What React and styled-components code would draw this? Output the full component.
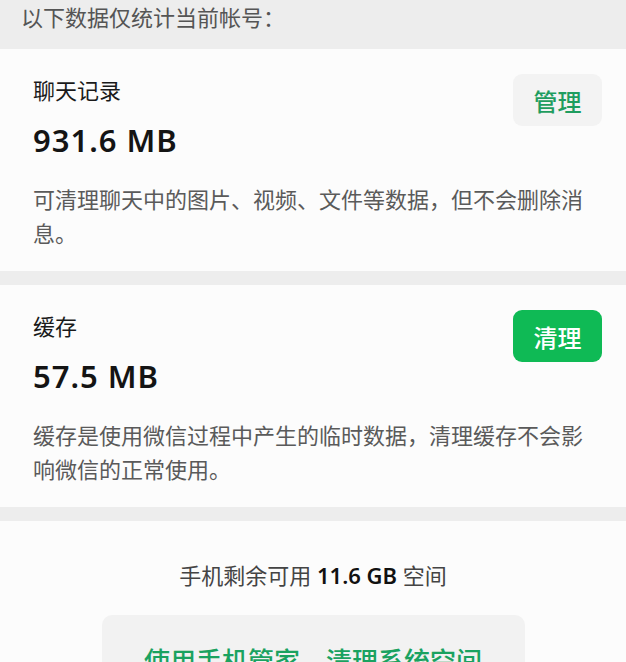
import React from "react";
import styled, { createGlobalStyle } from "styled-components";

const Global = createGlobalStyle`
  html, body { margin: 0; padding: 0; background: #ededed; overflow: hidden; }
  body { font-family: "Noto Sans", "Noto Sans CJK SC", sans-serif; }
`;

const Page = styled.div`
  width: 626px;
  background: #ededed;
  display: flex;
  flex-direction: column;
  gap: 14px;
`;

const Notice = styled.div`
  padding: 2px 21px 3px;
  font-size: 22px;
  line-height: 30px;
  color: #555;
`;

const Card = styled.section`
  background: #fcfcfc;
  padding: 25px 24px 21px 33px;
  display: flex;
  flex-direction: column;
`;

const TopRow = styled.div`
  display: flex;
  justify-content: space-between;
  align-items: flex-start;
`;

const Heading = styled.div`
  display: flex;
  flex-direction: column;
  padding-top: 1px;
`;

const Title = styled.div`
  font-size: 22px;
  line-height: 30px;
  color: #1a1a1a;
`;

const Size = styled.div`
  margin-top: 16px;
  font-size: 31px;
  line-height: 38px;
  font-weight: 600;
  letter-spacing: 1px;
  color: #141414;
`;

const ActionButton = styled.button`
  width: 89px;
  height: 52px;
  border: none;
  border-radius: 9px;
  font-family: "Noto Sans CJK SC", sans-serif;
  font-size: 24px;
  font-weight: 500;
  background: ${(p) => (p.$primary ? "#0fba55" : "#f3f3f3")};
  color: ${(p) => (p.$primary ? "#fff" : "#1f9d5f")};
  padding: 0;
`;

const Desc = styled.p`
  margin: 23px 0 0;
  font-size: 22px;
  line-height: 34px;
  color: #5a5a5a;
`;

const Footer = styled.section`
  background: #fcfcfc;
  padding: 39px 0 0;
  display: flex;
  flex-direction: column;
  align-items: center;
  gap: 25px;
  height: 160px;
`;

const Free = styled.div`
  font-size: 22px;
  line-height: 30px;
  color: #444;
`;

const Strong = styled.span`
  font-weight: 600;
  color: #111;
`;

const WideButton = styled.button`
  width: 423px;
  height: 80px;
  border: none;
  border-radius: 10px;
  background: #f2f2f2;
  color: #1aa260;
  font-family: "Noto Sans CJK SC", sans-serif;
  font-size: 26px;
  font-weight: 500;
  padding: 8px 0 0;
`;

function StorageCard({ title, size, action, primary, desc }) {
  return (
    <Card>
      <TopRow>
        <Heading>
          <Title>{title}</Title>
          <Size>{size}</Size>
        </Heading>
        <ActionButton $primary={primary}>{action}</ActionButton>
      </TopRow>
      <Desc>{desc}</Desc>
    </Card>
  );
}

export default function App() {
  return (
    <Page>
      <Global />
      <Notice>以下数据仅统计当前帐号：</Notice>
      <StorageCard
        title="聊天记录"
        size="931.6 MB"
        action="管理"
        desc="可清理聊天中的图片、视频、文件等数据，但不会删除消息。"
      />
      <StorageCard
        title="缓存"
        size="57.5 MB"
        action="清理"
        primary
        desc="缓存是使用微信过程中产生的临时数据，清理缓存不会影响微信的正常使用。"
      />
      <Footer>
        <Free>
          手机剩余可用 <Strong>11.6 GB</Strong> 空间
        </Free>
        <WideButton>使用手机管家，清理系统空间</WideButton>
      </Footer>
    </Page>
  );
}
